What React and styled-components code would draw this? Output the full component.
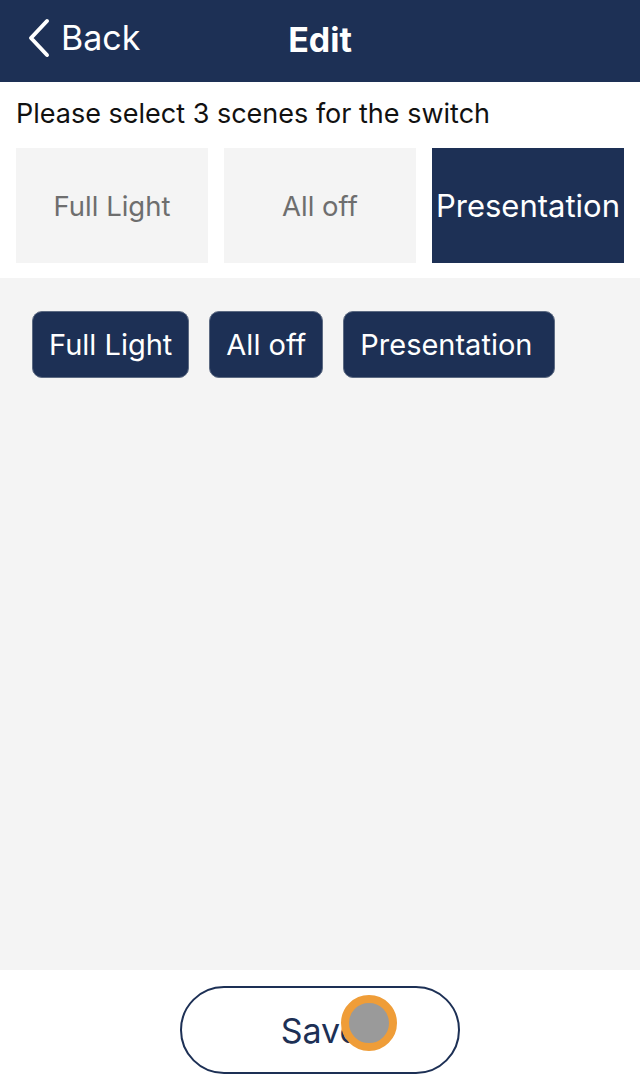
import React from "react";
import styled, { createGlobalStyle } from "styled-components";

const navy = "#1d3055";

const GlobalStyle = createGlobalStyle`
  html, body {
    margin: 0;
    padding: 0;
    background: #ffffff;
    font-family: Inter, "Noto Sans", sans-serif;
  }
`;

const scenes = ["Full Light", "All off", "Presentation"];

const App = () => {
  return (
    <>
      <GlobalStyle />
      <Page>
        <Header>
          <BackButton>
            <svg width="26" height="42" viewBox="0 0 26 42">
              <path
                d="M21 4 L5 21 L21 38"
                fill="none"
                stroke="#fff"
                strokeWidth="4"
                strokeLinecap="round"
                strokeLinejoin="round"
              />
            </svg>
            <span>Back</span>
          </BackButton>
          <Title>Edit</Title>
        </Header>
        <Picker>
          <Hint>Please select 3 scenes for the switch</Hint>
          <TileRow>
            {scenes.map((s) => (
              <Tile key={s} active={s === "Presentation"}>
                {s}
              </Tile>
            ))}
          </TileRow>
        </Picker>
        <Selected>
          {scenes.map((s, i) => (
            <Chip key={s} wide={i === scenes.length - 1}>
              {s}
            </Chip>
          ))}
        </Selected>
        <Footer>
          <SaveButton>
            Save
            <Touch />
          </SaveButton>
        </Footer>
      </Page>
    </>
  );
};

export default App;

const Page = styled.div`
  display: flex;
  flex-direction: column;
  width: 640px;
  height: 1090px;
  overflow: hidden;
`;

const Header = styled.div`
  position: relative;
  display: flex;
  align-items: center;
  justify-content: center;
  height: 82px;
  background: ${navy};
  color: #fff;
  flex-shrink: 0;
`;

const BackButton = styled.div`
  position: absolute;
  left: 26px;
  top: 17px;
  display: flex;
  align-items: center;
  gap: 9px;
  font-size: 34px;
  span {
    margin-top: -2px;
  }
`;

const Title = styled.div`
  font-size: 34px;
  font-weight: 700;
  margin-top: -4px;
`;

const Picker = styled.div`
  display: flex;
  flex-direction: column;
  padding: 15px 16px 15px;
  background: #fff;
  flex-shrink: 0;
`;

const Hint = styled.div`
  font-size: 27px;
  color: #111;
  line-height: 34px;
`;

const TileRow = styled.div`
  display: grid;
  grid-template-columns: repeat(3, 1fr);
  gap: 16px;
  margin-top: 17px;
`;

const Tile = styled.div`
  display: flex;
  align-items: center;
  justify-content: center;
  height: 115px;
  white-space: nowrap;
  background: ${(p) => (p.active ? navy : "#f4f4f4")};
  color: ${(p) => (p.active ? "#fff" : "#6e6e6e")};
  font-size: ${(p) => (p.active ? "31px" : "27.5px")};
`;

const Selected = styled.div`
  flex: 1;
  display: flex;
  align-items: flex-start;
  gap: 20px;
  padding: 33px 32px;
  background: #f4f4f4;
`;

const Chip = styled.div`
  display: flex;
  align-items: center;
  height: 67px;
  box-sizing: border-box;
  padding: ${(p) => (p.wide ? "0 22px 0 16px" : "0 16px")};
  background: ${navy};
  color: #fff;
  font-size: 29px;
  border: 1px solid #5c6a82;
  border-radius: 10px;
`;

const Footer = styled.div`
  display: flex;
  justify-content: center;
  align-items: flex-start;
  height: 120px;
  padding-top: 16px;
  box-sizing: border-box;
  background: #fff;
  flex-shrink: 0;
`;

const SaveButton = styled.div`
  position: relative;
  display: flex;
  align-items: center;
  justify-content: center;
  width: 280px;
  height: 88px;
  box-sizing: border-box;
  border: 2px solid ${navy};
  border-radius: 44px;
  color: ${navy};
  font-size: 34px;
`;

const Touch = styled.div`
  position: absolute;
  left: 159px;
  top: 7px;
  width: 56px;
  height: 56px;
  box-sizing: border-box;
  border-radius: 50%;
  border: 8px solid #ef9d38;
  background: #9a9a9a;
`;
